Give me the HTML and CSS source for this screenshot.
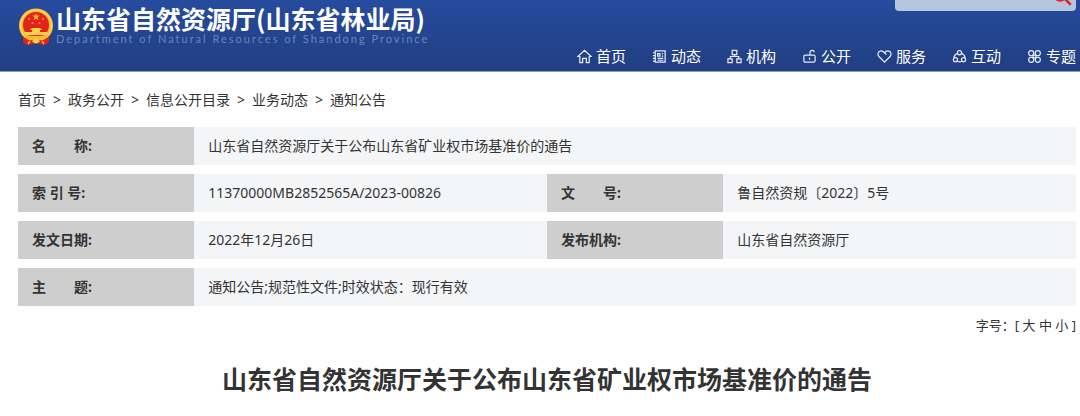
FILE: index.html
```
<!DOCTYPE html>
<html lang="zh-CN">
  <head>
    <meta charset="UTF-8" />
    <meta name="viewport" content="width=device-width, initial-scale=1.0" />
    <title>山东省自然资源厅(山东省林业局)</title>
    <link rel="stylesheet" href="styles.css">
  </head>
  <body>
    <header class="header">
      <div class="header-top">
        <a href="#" class="brand">
          <svg class="emblem" viewBox="0 0 36 38" aria-hidden="true">
            <path d="M5 27 L5 34 Q8 37.500 13 36.500 L18 35 L23 36.500 Q28 37.500 31 34 L31 27 Z" fill="#d8201c" />
            <circle cx="18" cy="17.500" r="17" fill="#f3bb35" />
            <circle cx="18" cy="17.500" r="15.500" fill="none" stroke="#ffd45c" stroke-width="1.5" />
            <circle cx="18" cy="17" r="13" fill="#e3241d" />
            <path d="M18 5 l1 2.600 h2.800 l-2.200 1.700 .8 2.700 -2.400-1.600 -2.400 1.600 .8-2.700 -2.200-1.700 h2.800z" fill="#f7b636" />
            <g fill="#e99a30">
              <circle cx="11" cy="11" r="1" />
              <circle cx="25" cy="11" r="1" />
              <circle cx="14.500" cy="15" r="1" />
              <circle cx="21.500" cy="15" r="1" />
            </g>
            <path d="M12 22 l2-2 h8 l2 2 h-2 v2 h7 v3 H7 v-3 h7 v-2z" fill="#ffd04a" />
            <path d="M6 27 Q18 29 30 27 L28 31 Q18 33 8 31Z" fill="#f3bb35" />
            <path d="M5 28 Q9 33 15 32 L13 36.500 Q8 37.500 5 34 Z M31 28 Q27 33 21 32 L23 36.500 Q28 37.500 31 34 Z" fill="#dc231c" />
            <circle cx="18" cy="33" r="2.500" fill="#ffd04a" />
            <path d="M10 36 L12 33 M26 36 L24 33" stroke="#f3bb35" stroke-width="1.500" />
          </svg>
          <span class="brand-text">
            <span class="brand-name">山东省自然资源厅(山东省林业局)</span>
            <span class="brand-en">Department of Natural Resources of Shandong Province</span>
          </span>
        </a>
        <form class="search">
          <input type="text" class="search-input" aria-label="搜索" />
          <button type="submit" class="search-btn" aria-label="搜索">
            <svg viewBox="0 0 16 16"><circle cx="6.500" cy="6.500" r="5" /><path d="M10 10 L15 15" /></svg>
          </button>
        </form>
      </div>

      <nav class="nav">
        <a href="#">
          <svg viewBox="0 0 16 16"><path d="M1 8 L8 1.500 L15 8 H13 V14.500 H10 V10 H6 V14.500 H3 V8 Z" /></svg>
          首页
        </a>
        <a href="#">
          <svg viewBox="0 0 16 16"><path d="M3.500 2 H14 V14 H3.500 Z M6 5 H8.500 V7.500 H6 Z M10.500 5 H12 M10.500 7.500 H12 M6 10 H12 M6 12 H12 M1 4 H3 M1 7 H3 M1 10 H3 M1 13 H3" /></svg>
          动态
        </a>
        <a href="#">
          <svg viewBox="0 0 16 16"><path d="M5.500 1.500 H10.500 V6 H5.500 Z M1 10.500 H5.500 V14.500 H1 Z M10.500 10.500 H15 V14.500 H10.500 Z M8 6 V8 M3.500 10.500 V8 H12.500 V10.500" /></svg>
          机构
        </a>
        <a href="#">
          <svg viewBox="0 0 16 16"><path d="M3.500 6.500 H12.500 Q14 6.500 14 8 V12.500 Q14 14 12.500 14 H3.500 Q2 14 2 12.500 V8 Q2 6.500 3.500 6.500 Z M8 9 V11.500 M8.500 6.500 V4 Q8.500 1.500 10.700 1.500 Q13 1.500 13 3.500" /></svg>
          公开
        </a>
        <a href="#">
          <svg viewBox="0 0 16 16"><path d="M8 14 L2 8 Q0 5 2 3 Q5 .5 8 4 Q11 .5 14 3 Q16 5 14 8 Z M8 4 L10 6" /></svg>
          服务
        </a>
        <a href="#">
          <svg viewBox="0 0 16 16"><circle cx="8" cy="4" r="2.200" /><circle cx="3.700" cy="11.500" r="2.200" /><circle cx="12.300" cy="11.500" r="2.200" /><path d="M5.800 4.500 Q2.300 6 2 9.700 M10.200 4.500 Q13.700 6 14 9.700 M5.500 13 Q8 14.500 10.500 13" /></svg>
          互动
        </a>
        <a href="#">
          <svg viewBox="0 0 16 16"><circle cx="4.500" cy="4.500" r="2.700" /><circle cx="11.500" cy="4.500" r="2.700" /><circle cx="4.500" cy="11.500" r="2.700" /><circle cx="11.500" cy="11.500" r="2.700" /><path d="M6.500 6.500 H9.500 V9.500 H6.500 Z" /></svg>
          专题
        </a>
      </nav>
    </header>

    <main class="content">
      <nav class="breadcrumb">
        <a href="#">首页</a>
        <span>&gt;</span>
        <a href="#">政务公开</a>
        <span>&gt;</span>
        <a href="#">信息公开目录</a>
        <span>&gt;</span>
        <a href="#">业务动态</a>
        <span>&gt;</span>
        <a href="#">通知公告</a>
      </nav>

      <table class="info-table">
        <colgroup>
          <col class="col-label" />
          <col class="col-value" />
          <col class="col-label" />
          <col class="col-value" />
        </colgroup>
        <tr>
          <th scope="row">名　　称:</th>
          <td colspan="3">山东省自然资源厅关于公布山东省矿业权市场基准价的通告</td>
        </tr>
        <tr>
          <th scope="row">索 引 号:</th>
          <td>11370000MB2852565A/2023-00826</td>
          <th scope="row">文　　号:</th>
          <td>鲁自然资规〔2022〕5号</td>
        </tr>
        <tr>
          <th scope="row">发文日期:</th>
          <td>2022年12月26日</td>
          <th scope="row">发布机构:</th>
          <td>山东省自然资源厅</td>
        </tr>
        <tr>
          <th scope="row">主　　题:</th>
          <td colspan="3">通知公告;规范性文件;时效状态：现行有效</td>
        </tr>
      </table>

      <div class="font-size">
        字号：[ <a href="#">大</a> <a href="#">中</a> <a href="#">小</a> ]
      </div>

      <h1 class="title">山东省自然资源厅关于公布山东省矿业权市场基准价的通告</h1>
    </main>
  </body>
</html>
```
FILE: styles.css
```
* {
  box-sizing: border-box;
}

body {
  margin: 0;
  font-family: "Noto Sans", "Noto Sans CJK SC", sans-serif;
  font-size: 14px;
  color: #333;
  background-color: #fff;
}

a {
  color: inherit;
  text-decoration: none;
}

.header {
  padding: 0 4px 0 18px;
  overflow: hidden;
  color: #fff;
  background: linear-gradient(#264c9e, #213e80);
  border-bottom: 1px solid #8a9cc6;
}

.header-top {
  display: flex;
  justify-content: space-between;
  align-items: flex-start;
}

.brand {
  display: flex;
  align-items: center;
  gap: 2px;
  padding-top: 6px;
}

.emblem {
  width: 36px;
  height: 38px;
}

.brand-text {
  display: flex;
  flex-direction: column;
}

.brand-name {
  font-family: "Noto Sans CJK SC", sans-serif;
  font-size: 25px;
  font-weight: 700;
  line-height: 24px;
}

.brand-en {
  font-family: Lato, sans-serif;
  font-size: 11px;
  line-height: 18px;
  letter-spacing: 2px;
  color: #6b83bb;
}

.search {
  display: flex;
  align-items: center;
  width: 181px;
  height: 30px;
  margin-top: -19px;
  padding-right: 4px;
  background-color: #b5c6de;
  border-radius: 4px;
}

.search-input {
  flex: 1;
  min-width: 0;
  border: none;
  outline: none;
  background: none;
}

.search-btn {
  display: flex;
  padding: 0;
  border: none;
  background: none;
  cursor: pointer;
}

.search-btn svg {
  width: 20px;
  height: 20px;
  fill: none;
  stroke: #d9262c;
  stroke-width: 2;
}

.nav {
  display: flex;
  justify-content: flex-end;
  gap: 26px;
  padding-bottom: 7px;
  font-size: 15px;
  line-height: 16px;
}

.nav a {
  display: flex;
  align-items: center;
  gap: 4px;
}

.nav svg {
  width: 15px;
  height: 15px;
  fill: none;
  stroke: #e6ebf6;
  stroke-width: 1.3;
}

.content {
  padding: 0 4px 0 18px;
}

.breadcrumb {
  display: flex;
  gap: 7px;
  padding: 18px 0 8px;
  line-height: 20px;
}

.info-table {
  width: 100%;
  table-layout: fixed;
  border-collapse: separate;
  border-spacing: 0 9px;
  line-height: 20px;
}

.col-label {
  width: 16.66%;
}

.col-value {
  width: 33.33%;
}

.info-table th,
.info-table td {
  padding: 9px 14px;
  text-align: left;
}

.info-table th {
  background-color: #cecece;
}

.info-table td {
  background-color: #f4f5f7;
}

.font-size {
  font-size: 13px;
  line-height: 20px;
  text-align: right;
}

.title {
  margin: 25px 0 16px;
  font-size: 25px;
  line-height: 38px;
  text-align: center;
}
```
